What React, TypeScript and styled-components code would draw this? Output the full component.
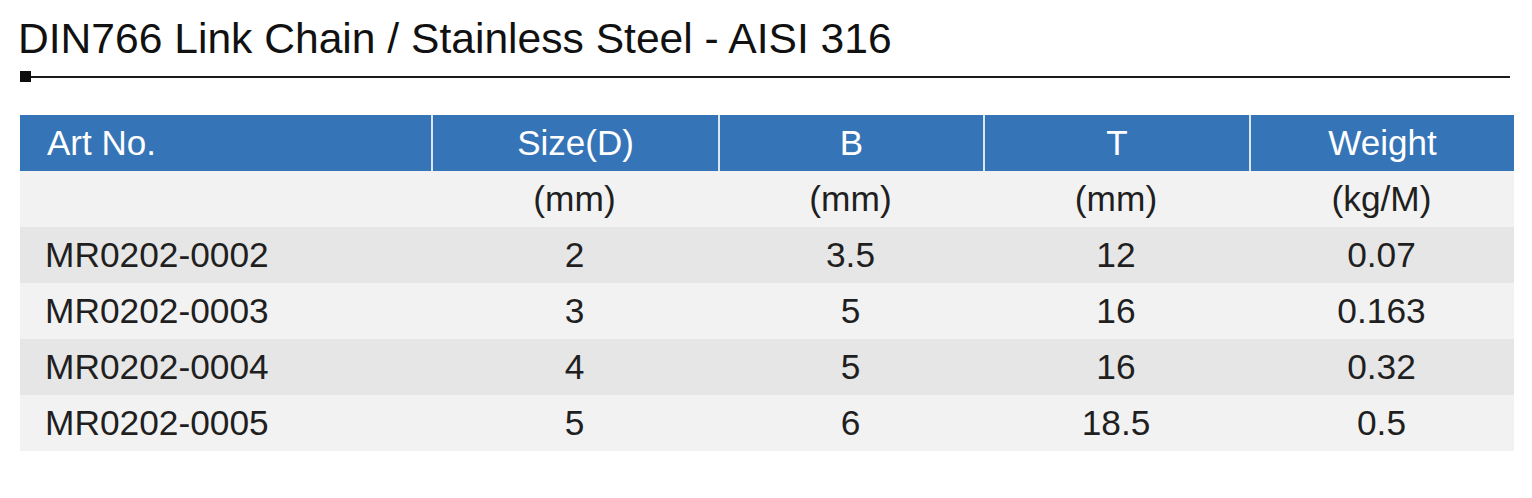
import React from "react";
import styled, { createGlobalStyle } from "styled-components";

const GlobalStyle = createGlobalStyle`
  html, body {
    margin: 0;
    padding: 0;
    background: #ffffff;
  }
  body {
    font-family: "Liberation Sans", Arial, Helvetica, sans-serif;
    color: #1f1f1f;
  }
`;

const Page = styled.div`
  width: 1532px;
  height: 498px;
  box-sizing: border-box;
  padding: 14px 18px 0 20px;
  display: flex;
  flex-direction: column;
`;

const Title = styled.h1`
  margin: 0 0 0 -2px;
  font-size: 42.6px;
  line-height: 48px;
  font-weight: 400;
  color: #111111;
  letter-spacing: 0;
`;

const Rule = styled.div`
  display: flex;
  align-items: center;
  width: 1490px;
  margin-top: 9px;
  height: 11px;
`;

const RuleMark = styled.span`
  width: 11px;
  height: 11px;
  background: #0d0d0d;
  flex: none;
`;

const RuleLine = styled.span`
  flex: 1;
  height: 2px;
  background: #1a1a1a;
`;

const Table = styled.div`
  margin-top: 33px;
  width: 1494px;
  display: grid;
  grid-template-columns: 411px 287px 265px 266px 265px;
`;

const HeaderCell = styled.div<{ $first?: boolean }>`
  height: 56px;
  background: #3674b8;
  color: #ffffff;
  font-size: 35px;
  display: flex;
  align-items: center;
  justify-content: ${(p) => (p.$first ? "flex-start" : "center")};
  padding-left: ${(p) => (p.$first ? "27px" : "0")};
  border-left: ${(p) => (p.$first ? "none" : "2px solid #dbe6f3")};
  box-sizing: border-box;
  white-space: nowrap;
`;

const Cell = styled.div<{ $first?: boolean; $shade: "light" | "dark" }>`
  height: 56px;
  background: ${(p) => (p.$shade === "dark" ? "#e6e6e6" : "#f2f2f2")};
  font-size: 35.3px;
  color: #1f1f1f;
  display: flex;
  align-items: center;
  justify-content: ${(p) => (p.$first ? "flex-start" : "center")};
  padding-left: ${(p) => (p.$first ? "25px" : "0")};
  box-sizing: border-box;
  white-space: nowrap;
`;

const headers = ["Art No.", "Size(D)", "B", "T", "Weight"];
const units = ["", "(mm)", "(mm)", "(mm)", "(kg/M)"];
const rows = [
  ["MR0202-0002", "2", "3.5", "12", "0.07"],
  ["MR0202-0003", "3", "5", "16", "0.163"],
  ["MR0202-0004", "4", "5", "16", "0.32"],
  ["MR0202-0005", "5", "6", "18.5", "0.5"],
];

export default function App() {
  return (
    <>
      <GlobalStyle />
      <Page>
        <Title>DIN766 Link Chain / Stainless Steel - AISI 316</Title>
        <Rule>
          <RuleMark />
          <RuleLine />
        </Rule>
        <Table>
          {headers.map((h, i) => (
            <HeaderCell key={h} $first={i === 0}>
              {h}
            </HeaderCell>
          ))}
          {units.map((u, i) => (
            <Cell key={`u${i}`} $first={i === 0} $shade="light">
              {u}
            </Cell>
          ))}
          {rows.map((r, ri) =>
            r.map((v, ci) => (
              <Cell
                key={`${ri}-${ci}`}
                $first={ci === 0}
                $shade={ri % 2 === 0 ? "dark" : "light"}
              >
                {v}
              </Cell>
            ))
          )}
        </Table>
      </Page>
    </>
  );
}
